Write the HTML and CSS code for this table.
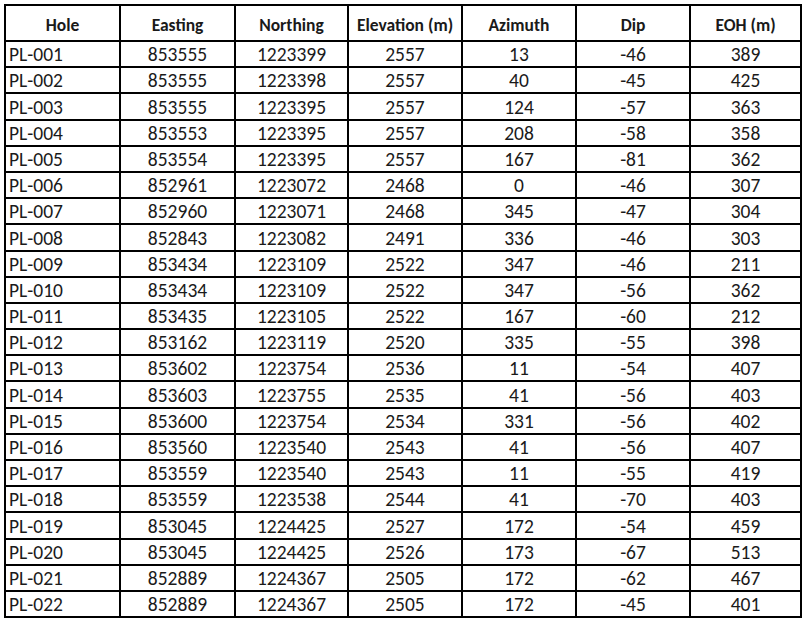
FILE: index.html
```html
<!DOCTYPE html>
<html>
<head>
<meta charset="utf-8">
<link rel="stylesheet" href="styles.css">
</head>
<body>
<table class="holes">
<colgroup>
<col class="c1"><col class="c2"><col class="c3"><col class="c4"><col class="c5"><col class="c6"><col class="c7">
</colgroup>
<thead>
<tr class="head"><th>Hole</th><th>Easting</th><th>Northing</th><th>Elevation (m)</th><th>Azimuth</th><th>Dip</th><th>EOH (m)</th></tr>
</thead>
<tbody>
<tr><td>PL-001</td><td>853555</td><td>1223399</td><td>2557</td><td>13</td><td>-46</td><td>389</td></tr>
<tr><td>PL-002</td><td>853555</td><td>1223398</td><td>2557</td><td>40</td><td>-45</td><td>425</td></tr>
<tr><td>PL-003</td><td>853555</td><td>1223395</td><td>2557</td><td>124</td><td>-57</td><td>363</td></tr>
<tr><td>PL-004</td><td>853553</td><td>1223395</td><td>2557</td><td>208</td><td>-58</td><td>358</td></tr>
<tr><td>PL-005</td><td>853554</td><td>1223395</td><td>2557</td><td>167</td><td>-81</td><td>362</td></tr>
<tr><td>PL-006</td><td>852961</td><td>1223072</td><td>2468</td><td>0</td><td>-46</td><td>307</td></tr>
<tr><td>PL-007</td><td>852960</td><td>1223071</td><td>2468</td><td>345</td><td>-47</td><td>304</td></tr>
<tr><td>PL-008</td><td>852843</td><td>1223082</td><td>2491</td><td>336</td><td>-46</td><td>303</td></tr>
<tr><td>PL-009</td><td>853434</td><td>1223109</td><td>2522</td><td>347</td><td>-46</td><td>211</td></tr>
<tr><td>PL-010</td><td>853434</td><td>1223109</td><td>2522</td><td>347</td><td>-56</td><td>362</td></tr>
<tr><td>PL-011</td><td>853435</td><td>1223105</td><td>2522</td><td>167</td><td>-60</td><td>212</td></tr>
<tr><td>PL-012</td><td>853162</td><td>1223119</td><td>2520</td><td>335</td><td>-55</td><td>398</td></tr>
<tr><td>PL-013</td><td>853602</td><td>1223754</td><td>2536</td><td>11</td><td>-54</td><td>407</td></tr>
<tr><td>PL-014</td><td>853603</td><td>1223755</td><td>2535</td><td>41</td><td>-56</td><td>403</td></tr>
<tr><td>PL-015</td><td>853600</td><td>1223754</td><td>2534</td><td>331</td><td>-56</td><td>402</td></tr>
<tr><td>PL-016</td><td>853560</td><td>1223540</td><td>2543</td><td>41</td><td>-56</td><td>407</td></tr>
<tr><td>PL-017</td><td>853559</td><td>1223540</td><td>2543</td><td>11</td><td>-55</td><td>419</td></tr>
<tr><td>PL-018</td><td>853559</td><td>1223538</td><td>2544</td><td>41</td><td>-70</td><td>403</td></tr>
<tr><td>PL-019</td><td>853045</td><td>1224425</td><td>2527</td><td>172</td><td>-54</td><td>459</td></tr>
<tr><td>PL-020</td><td>853045</td><td>1224425</td><td>2526</td><td>173</td><td>-67</td><td>513</td></tr>
<tr><td>PL-021</td><td>852889</td><td>1224367</td><td>2505</td><td>172</td><td>-62</td><td>467</td></tr>
<tr><td>PL-022</td><td>852889</td><td>1224367</td><td>2505</td><td>172</td><td>-45</td><td>401</td></tr>
</tbody>
</table>
</body>
</html>
```
FILE: styles.css
```css
html, body {
  margin: 0;
  padding: 0;
  background: #ffffff;
}
body {
  font-family: Carlito, Lato, "Liberation Sans", sans-serif;
  color: #1a1a1a;
}
.holes {
  margin: 4px 0 0 4px;
  border-collapse: collapse;
  table-layout: fixed;
  width: 796px;
  border: 2px solid #000;
}
.c1 { width: 115px; }
.c2 { width: 115px; }
.c3 { width: 113px; }
.c4 { width: 114px; }
.c5 { width: 114px; }
.c6 { width: 114px; }
.c7 { width: 111px; }
.holes tr {
  height: 26.2px;
}
.holes tr.head {
  height: 36px;
}
.holes th, .holes td {
  border: 2px solid #000;
  padding: 0 3px;
  text-align: center;
  white-space: nowrap;
  overflow: hidden;
}
.holes th {
  font-weight: bold;
  font-size: 17.5px;
  line-height: 20px;
  vertical-align: middle;
  padding-top: 3px;
}
.holes td {
  font-size: 19.5px;
  line-height: 20px;
  vertical-align: bottom;
  padding-bottom: 2px;
}
.holes td:first-child {
  text-align: left;
}
```
